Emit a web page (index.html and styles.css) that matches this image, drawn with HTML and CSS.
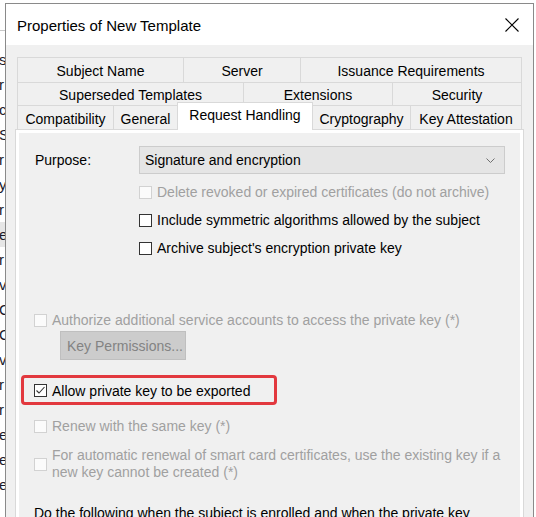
FILE: index.html
```html
<!DOCTYPE html>
<html>
<head>
<meta charset="utf-8">
<link rel="stylesheet" href="styles.css">
</head>
<body>
<div class="desk">
  <div class="bgwin">
    <div class="bg-head"></div>
    <div class="bg-list">
      <div class="bg-item">s</div>
      <div class="bg-item">r</div>
      <div class="bg-item">c</div>
      <div class="bg-item">S</div>
      <div class="bg-item">r</div>
      <div class="bg-item">y</div>
      <div class="bg-item">r</div>
      <div class="bg-item sel">e</div>
      <div class="bg-item">r</div>
      <div class="bg-item">v</div>
      <div class="bg-item">C</div>
      <div class="bg-item">C</div>
      <div class="bg-item">v</div>
      <div class="bg-item">r</div>
      <div class="bg-item">r</div>
      <div class="bg-item">e</div>
      <div class="bg-item">e</div>
      <div class="bg-item">e</div>
    </div>
  </div>

  <div class="dialog">
    <div class="titlebar">
      <span class="title">Properties of New Template</span>
      <svg class="close" width="14" height="14" viewBox="0 0 14 14"><path d="M0.5 0.5L13.5 13.5M13.5 0.5L0.5 13.5" stroke="#000" stroke-width="1.1" fill="none"/></svg>
    </div>
    <div class="dbody">
      <div class="tabs">
        <div class="tabrow r1">
          <div class="tab w-subject">Subject Name</div>
          <div class="tab w-server">Server</div>
          <div class="tab w-issuance last">Issuance Requirements</div>
        </div>
        <div class="tabrow r2">
          <div class="tab w-superseded">Superseded Templates</div>
          <div class="tab w-extensions">Extensions</div>
          <div class="tab w-security last">Security</div>
        </div>
        <div class="tabrow r3">
          <div class="tab w-compat">Compatibility</div>
          <div class="tab w-general">General</div>
          <div class="tab w-request active">Request Handling</div>
          <div class="tab w-crypto noleft">Cryptography</div>
          <div class="tab w-keyatt last">Key Attestation</div>
        </div>
      </div>
      <div class="panel">
        <div class="page">
          <div class="purpose">
            <div class="plabel">Purpose:</div>
            <div class="select">
              <span>Signature and encryption</span>
              <svg class="chev" width="9" height="5" viewBox="0 0 9 5"><path d="M0.5 0.5L4.5 4.5L8.5 0.5" stroke="#707070" stroke-width="1" fill="none"/></svg>
            </div>
          </div>
          <div class="opts">
            <div class="cb-row disabled"><span class="cb"></span><span>Delete revoked or expired certificates (do not archive)</span></div>
            <div class="cb-row"><span class="cb"></span><span>Include symmetric algorithms allowed by the subject</span></div>
            <div class="cb-row"><span class="cb"></span><span>Archive subject's encryption private key</span></div>
          </div>
          <div class="cb-row disabled auth"><span class="cb"></span><span>Authorize additional service accounts to access the private key (*)</span></div>
          <div class="keyperm">Key Permissions...</div>
          <div class="redbox">
            <div class="cb-row export"><span class="cb checked"><svg width="11" height="11" viewBox="0 0 11 11"><path d="M1.5 5.5L4 8L9.5 2" stroke="#333" stroke-width="1.1" fill="none"/></svg></span><span>Allow private key to be exported</span></div>
          </div>
          <div class="cb-row disabled renew"><span class="cb"></span><span>Renew with the same key (*)</span></div>
          <div class="cb-row disabled auto"><span class="cb"></span><span class="two">For automatic renewal of smart card certificates, use the existing key if a<br>new key cannot be created (*)</span></div>
          <div class="dotext">Do the following when the subject is enrolled and when the private key</div>
        </div>
      </div>
    </div>
  </div>
</div>
</body>
</html>
```
FILE: styles.css
```css
* { box-sizing: border-box; }
html, body { margin: 0; padding: 0; }
body {
  width: 536px;
  height: 517px;
  overflow: hidden;
  background: #ffffff;
  font-family: "Liberation Sans", Arial, sans-serif;
  font-size: 14px;
  color: #000;
}
.desk {
  position: relative;
  width: 536px;
  height: 517px;
  overflow: hidden;
}

/* background window peeking at the left */
.bgwin {
  position: absolute;
  left: 0;
  top: 0;
  width: 6px;
  height: 517px;
  overflow: hidden;
  background: #fff;
}
.bg-head {
  height: 31px;
  border-bottom: 1px solid #c8c8c8;
}
.bg-list {
  padding-top: 16px;
}
.bg-item {
  height: 25px;
  line-height: 25px;
  font-size: 15px;
  color: #1a1a2a;
  text-indent: -1px;
}
.bg-item.sel { background: #e6e6e6; }

/* dialog */
.dialog {
  position: absolute;
  left: 5px;
  top: 3px;
  width: 529px;
  height: 530px;
  border: 1px solid #8a8a8a;
  border-bottom: none;
  background: #f0f0f0;
}
.titlebar {
  height: 41px;
  background: #ffffff;
  display: flex;
  align-items: center;
  padding-left: 11px;
  padding-right: 14px;
}
.title {
  font-size: 15px;
  flex: 1;
  padding-top: 1px;
}
.close { display: block; }

.dbody {
  padding: 12px 0 0 9px;
}

.tabs {
  margin-left: 2px;
  width: 505px;
}
.tabrow {
  display: flex;
}
.r1 { height: 25px; }
.r2 { height: 23px; }
.r3 { height: 24px; align-items: flex-end; }
.tab {
  height: 100%;
  border-top: 1px solid #d9d9d9;
  border-left: 1px solid #d9d9d9;
  background: #f0f0f0;
  display: flex;
  align-items: center;
  justify-content: center;
  white-space: nowrap;
  padding-top: 1px;
}
.tab.last { border-right: 1px solid #d9d9d9; }
.tab.noleft { border-left: none; }
.r3 .tab { height: 24px; padding-top: 2px; }
.r3 .tab.active {
  height: 28px;
  margin-bottom: -1px;
  background: #ffffff;
  border-right: 1px solid #d9d9d9;
  position: relative;
  z-index: 2;
  padding-top: 0;
  padding-bottom: 4px;
}

.w-subject { width: 166px; }
.w-server { width: 117px; }
.w-issuance { width: 222px; }
.w-superseded { width: 226px; }
.w-extensions { width: 149px; }
.w-security { width: 130px; }
.w-compat { width: 96px; }
.w-general { width: 64px; }
.w-request { width: 136px; }
.w-crypto { width: 97px; }
.w-keyatt { width: 112px; }

.panel {
  width: 509px;
  border: 1px solid #d9d9d9;
  background: #ffffff;
  padding: 3px 3px 0 3px;
  position: relative;
  z-index: 1;
}
.page {
  background: #f0f0f0;
  height: 420px;
  display: flex;
  flex-direction: column;
  align-items: flex-start;
}

.purpose {
  margin-top: 13px;
  height: 28px;
  display: flex;
  align-items: center;
}
.plabel {
  width: 120px;
  padding-left: 16px;
}
.select {
  width: 366px;
  height: 28px;
  background: #e5e5e5;
  border: 1px solid #cccccc;
  display: flex;
  align-items: center;
  padding-left: 5px;
  padding-right: 9px;
}
.select span { flex: 1; }
.chev { display: block; }

.opts {
  margin-left: 120px;
  margin-top: 4px;
}
.cb-row {
  height: 28px;
  display: flex;
  align-items: center;
  white-space: nowrap;
}
.cb {
  width: 13px;
  height: 13px;
  border: 1px solid #333333;
  background: #ffffff;
  margin-right: 5px;
  flex: none;
  display: flex;
  align-items: center;
  justify-content: center;
}
.cb svg { display: block; }
.disabled { color: #a0a0a0; }
.disabled .cb {
  border-color: #d2d2d2;
  background: #fbfbfb;
}

.auth {
  margin-left: 15px;
  margin-top: 48px;
  height: 20px;
}
.keyperm {
  margin-left: 41px;
  margin-top: 1px;
  width: 126px;
  height: 29px;
  background: #cccccc;
  border: 1px solid #bfbfbf;
  color: #838383;
  display: flex;
  align-items: center;
  padding-left: 6px;
}
.redbox {
  margin-top: 15px;
  margin-left: 2px;
  width: 256px;
  height: 30px;
  border: 3px solid #e2383e;
  border-radius: 4px;
  padding-left: 10px;
  display: flex;
  align-items: center;
}
.export { height: 24px; padding-top: 1px; }
.renew {
  margin-left: 15px;
  margin-top: 11px;
  height: 20px;
}
.auto {
  margin-left: 15px;
  margin-top: 11px;
  height: auto;
}
.two { line-height: 17px; }
.dotext {
  margin-left: 15px;
  margin-top: 24px;
  line-height: 17px;
  white-space: nowrap;
}
```
